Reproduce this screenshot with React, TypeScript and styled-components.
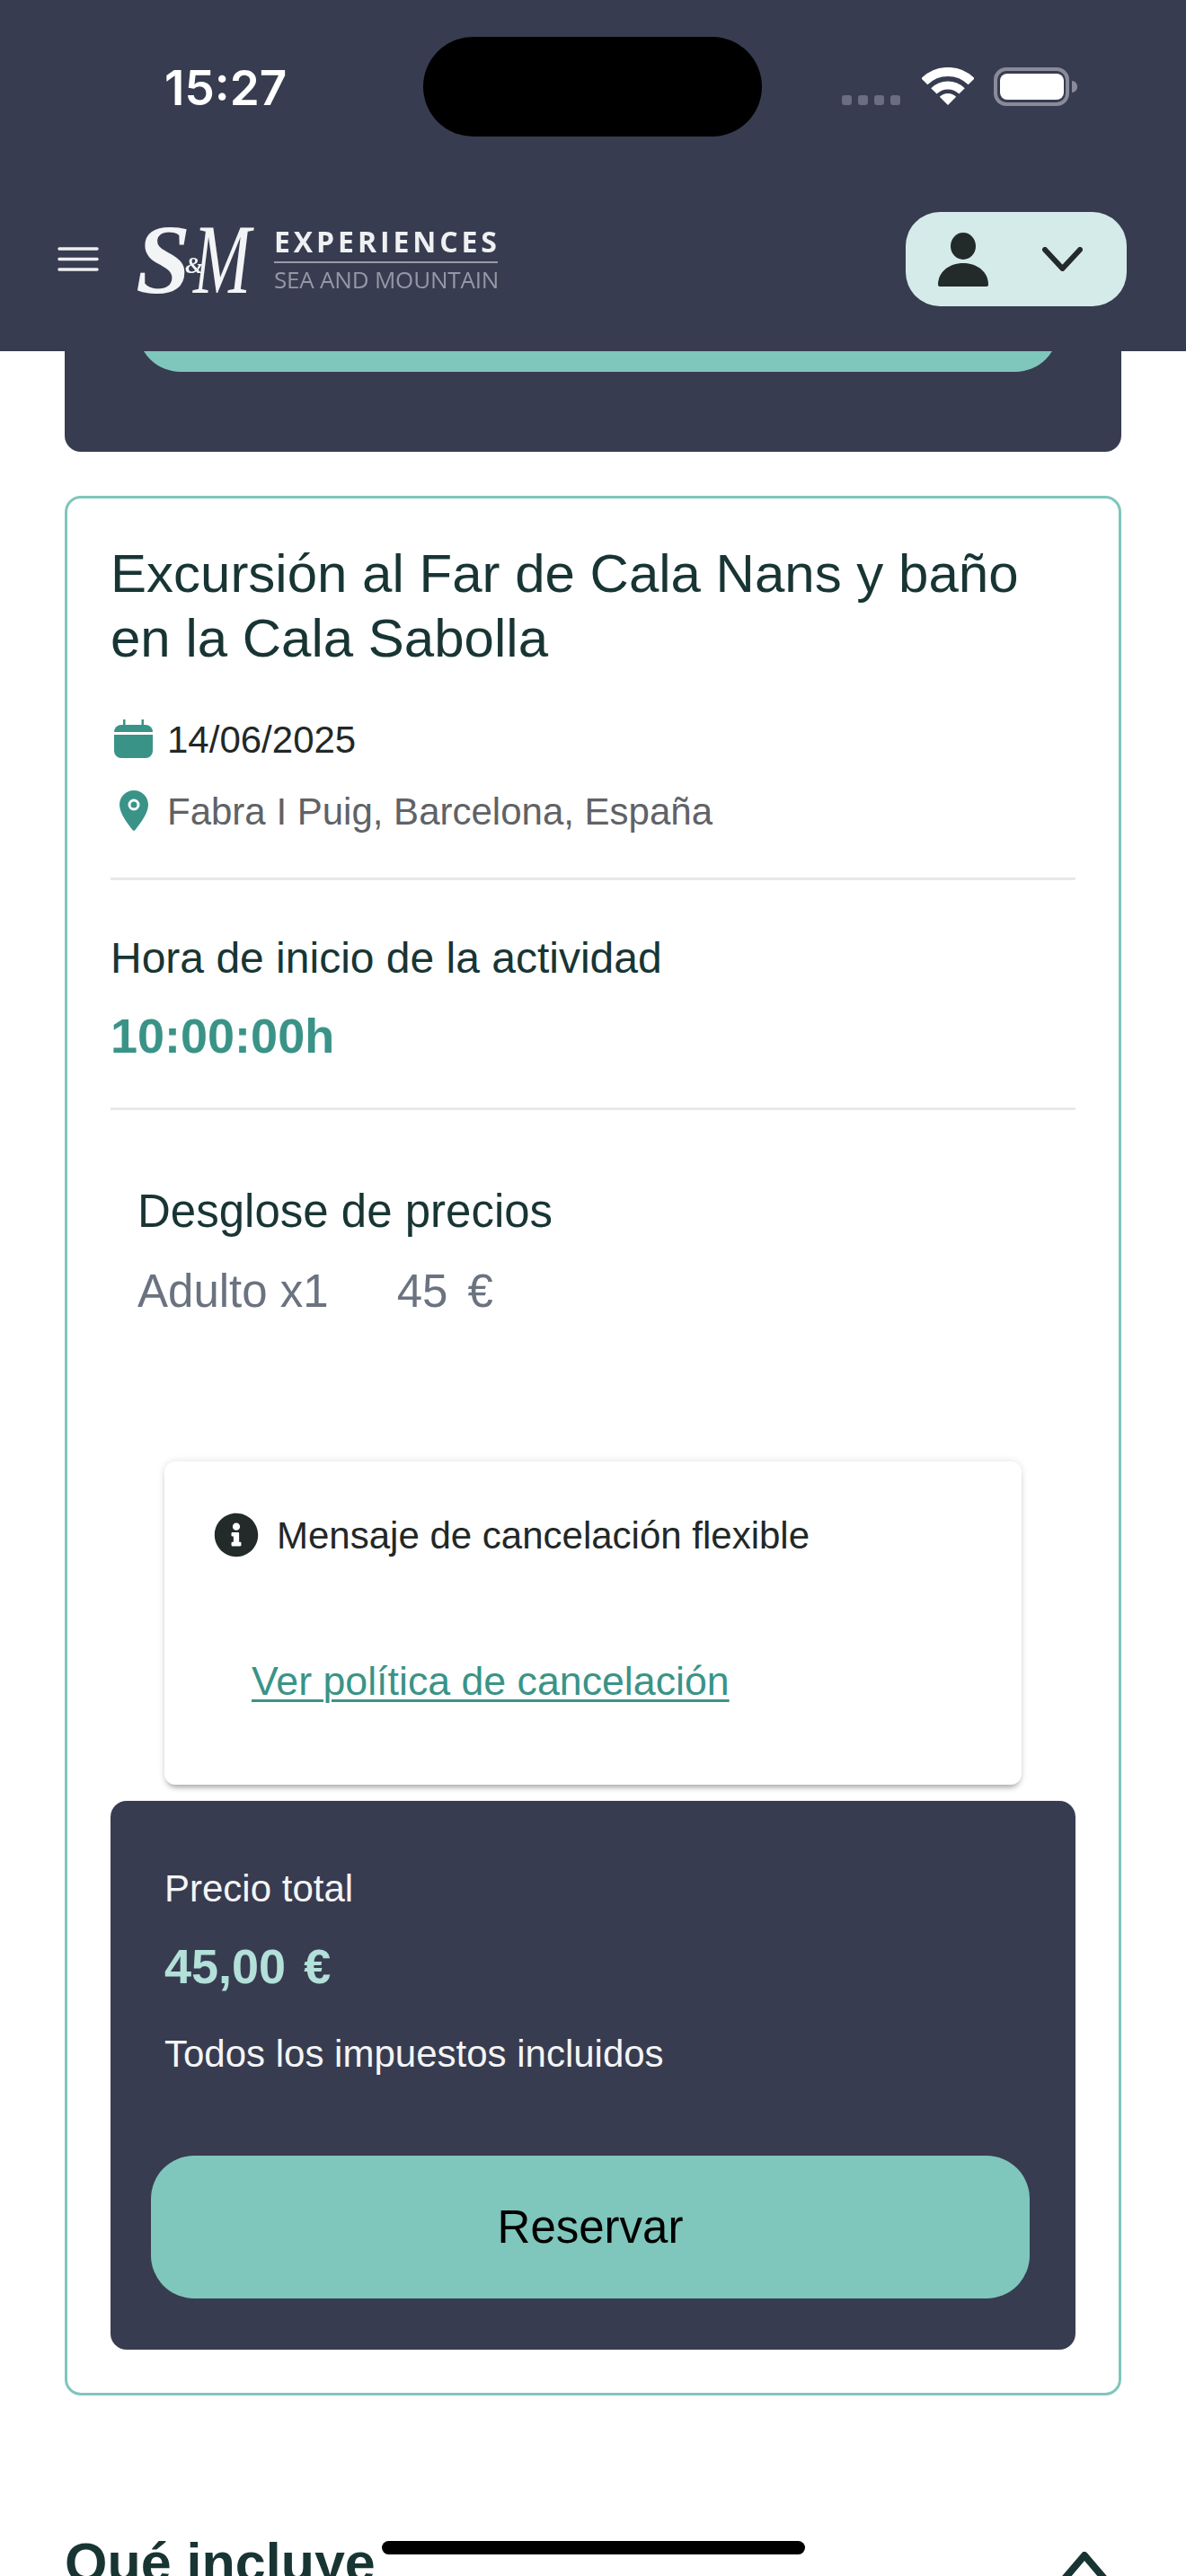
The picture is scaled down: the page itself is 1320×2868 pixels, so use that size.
import styled, { createGlobalStyle } from "styled-components";
import { FaInfoCircle } from "react-icons/fa";

const navy = "#383c50";
const teal = "#7fc6bc";
const deepTeal = "#3a9387";
const ink = "#183534";

const GlobalStyle = createGlobalStyle`
  html, body {
    margin: 0;
    padding: 0;
    background: #fff;
  }
  * {
    box-sizing: border-box;
  }
`;

const Page = styled.div`
  position: relative;
  width: 1320px;
  height: 2868px;
  overflow: hidden;
  background: #fff;
  font-family: "Liberation Sans", Arial, sans-serif;
`;

/* top bar */
const Header = styled.header`
  height: 391px;
  background: ${navy};
`;

const StatusBar = styled.div`
  display: flex;
  align-items: flex-start;
  height: 236px;
  padding: 41px 0 0 183px;
`;

const Clock = styled.span`
  width: 135px;
  margin-top: 25px;
  font-family: Inter, sans-serif;
  font-size: 53px;
  font-weight: 600;
  line-height: 64px;
  color: #fff;
  white-space: nowrap;
`;

const Island = styled.div`
  width: 377px;
  height: 111px;
  margin-left: 153px;
  border-radius: 56px;
  background: #000;
`;

const SignalDots = styled.div`
  display: flex;
  gap: 7px;
  margin: 65px 0 0 89px;
`;

const SignalDot = styled.span`
  width: 11px;
  height: 11px;
  border-radius: 3px;
  background: #6b6d80;
`;

const WifiIcon = styled.svg`
  width: 58px;
  height: 42px;
  margin: 34px 0 0 24px;
`;

const BatteryIcon = styled.svg`
  width: 94px;
  height: 43px;
  margin: 34px 0 0 22px;
`;

const NavBar = styled.div`
  display: flex;
  align-items: center;
  height: 105px;
  padding: 0 66px 0 64px;
`;

const MenuIcon = styled.svg`
  width: 46px;
  height: 28px;
  flex: none;
`;

const LogoMark = styled.div`
  display: flex;
  align-items: baseline;
  flex: none;
  width: 133px;
  height: 77px;
  margin-left: 41px;
  font-family: "Liberation Serif", serif;
  font-style: italic;
  font-weight: 700;
  font-size: 110px;
  line-height: 78px;
  color: #f3f4f6;
  filter: blur(0.4px);
`;

const LogoS = styled.span`
  flex: none;
  width: 61px;
`;

/* the ampersand sits small and raised between the two capitals */
const LogoAmp = styled.span`
  flex: none;
  width: 17px;
  margin-left: -6px;
  font-size: 26px;
  line-height: 30px;
  transform: translateY(-22px);
`;

const LogoM = styled.span`
  flex: none;
  width: 69px;
  margin-left: -8px;
  font-weight: 400;
  transform: scaleX(0.7);
  transform-origin: left center;
`;

const LogoWords = styled.div`
  display: flex;
  flex-direction: column;
  width: 249px;
  margin: 2px 0 0 21px;
  font-family: "Open Sans", sans-serif;
  white-space: nowrap;
  filter: blur(0.4px);
`;

const LogoTop = styled.span`
  padding-bottom: 5px;
  border-bottom: 2px solid #9a9ba9;
  font-size: 32px;
  font-weight: 700;
  line-height: 34px;
  letter-spacing: 3.9px;
  color: #eef0f2;
`;

const LogoBottom = styled.span`
  margin-top: 2px;
  font-size: 26px;
  line-height: 32px;
  letter-spacing: -0.2px;
  color: #9597a4;
`;

const AccountButton = styled.button`
  display: flex;
  align-items: center;
  gap: 60px;
  width: 246px;
  height: 105px;
  margin-left: auto;
  padding: 0 0 0 36px;
  border: 0;
  border-radius: 38px;
  background: #d5ebe9;
`;

/* tail of the panel scrolled under the header */
const ScrolledPanel = styled.section`
  height: 112px;
  margin: 0 72px;
  padding: 0 70px 0 81px;
  border-radius: 0 0 18px 18px;
  background: ${navy};
`;

const ScrolledButtonClip = styled.div`
  height: 23px;
  overflow: hidden;
`;

const ScrolledButton = styled.div`
  height: 158px;
  margin-top: -135px;
  border-radius: 48px;
  background: ${teal};
`;

/* booking card */
const Card = styled.section`
  margin: 49px 72px 0;
  padding: 48px;
  border: 3px solid ${teal};
  border-radius: 18px;
  background: #fff;
`;

const Title = styled.h1`
  margin: 0 0 51px;
  font-size: 60px;
  font-weight: 400;
  line-height: 72px;
  color: ${ink};
`;

const MetaRow = styled.div`
  display: flex;
  align-items: center;
  height: 48px;
  margin-top: ${(p) => p.$gap ?? 0}px;
  padding-top: 3px;
  font-size: 42px;
  line-height: 45px;
  color: ${(p) => p.$color};
`;

const MetaIconSlot = styled.span`
  display: flex;
  justify-content: center;
  width: 47px;
  margin: -3px 14px 0 2px;
`;

const Divider = styled.hr`
  height: 3px;
  margin: ${(p) => p.$top}px 0 0;
  border: 0;
  background: #e6e8ea;
`;

const StartLabel = styled.div`
  margin-top: 59px;
  font-size: 48px;
  line-height: 56px;
  color: ${ink};
`;

const StartTime = styled.div`
  margin-top: 26px;
  font-size: 54px;
  font-weight: 700;
  line-height: 64px;
  color: ${deepTeal};
`;

const Breakdown = styled.div`
  margin-top: 83px;
  padding-left: 30px;
`;

const BreakdownTitle = styled.div`
  font-size: 51px;
  line-height: 60px;
  color: ${ink};
`;

const BreakdownLine = styled.div`
  display: flex;
  gap: 76px;
  margin-top: 29px;
  font-size: 51px;
  line-height: 60px;
  word-spacing: 8px;
  color: #6b7280;
`;

const AdultLabel = styled.span`
  word-spacing: 0;
`;

const CancelNotice = styled.div`
  margin: 159px 60px 0;
  padding: 54px 55px 89px;
  border-radius: 12px;
  background: #fff;
  box-shadow: 0 6px 6px -3px rgba(0, 0, 0, 0.3), 0 0 8px rgba(0, 0, 0, 0.12);
`;

const NoticeRow = styled.div`
  display: flex;
  align-items: center;
  gap: 20px;
  padding-top: 3px;
  font-size: 42px;
  line-height: 52px;
  color: #222827;

  svg {
    flex: none;
    margin-top: -3px;
    color: #232a2a;
  }
`;

const PolicyLink = styled.a`
  display: block;
  margin: 110px 0 0 42px;
  font-size: 44.7px;
  line-height: 52px;
  color: ${deepTeal};
  text-decoration: underline;
  text-decoration-thickness: 3px;
  text-underline-offset: 5px;
`;

const TotalPanel = styled.div`
  margin-top: 18px;
  padding: 74px 51px 57px 45px;
  border-radius: 18px;
  background: ${navy};
`;

const TotalInfo = styled.div`
  padding-left: 15px;
`;

const TotalText = styled.div`
  margin-top: ${(p) => p.$gap ?? 0}px;
  font-size: 42px;
  line-height: 48px;
  color: #f4f5f6;
`;

const TotalAmount = styled.div`
  margin-top: 30px;
  font-size: 54px;
  font-weight: 700;
  line-height: 64px;
  word-spacing: 5px;
  color: #b3e0d9;
`;

const ReserveButton = styled.button`
  display: block;
  width: 100%;
  height: 159px;
  margin-top: 89px;
  border: 0;
  border-radius: 48px;
  background: ${teal};
  font-family: inherit;
  font-size: 51px;
  color: #000;
`;

/* next accordion section */
const SectionRow = styled.div`
  display: flex;
  justify-content: space-between;
  align-items: flex-start;
  margin-top: 150px;
  padding: 0 86px 0 72px;
`;

const SectionTitle = styled.h2`
  margin: 0;
  font-size: 61px;
  font-weight: 700;
  line-height: 72px;
  color: ${ink};
`;

const SectionChevron = styled.svg`
  width: 54px;
  height: 34px;
  margin-top: 24px;
`;

const HomeIndicator = styled.div`
  position: absolute;
  left: 425px;
  top: 2829px;
  width: 471px;
  height: 15px;
  border-radius: 8px;
  background: #000;
`;

function Wifi() {
  return (
    <WifiIcon viewBox="0 0 58 42">
      <path d="M29 42 L19.8 32.8 A13 13 0 0 1 38.2 32.8 Z" fill="#fff" />
      <path d="M13.4 26.4 A22 22 0 0 1 44.6 26.4" fill="none" stroke="#fff" strokeWidth="9" />
      <path d="M2.8 15.8 A37 37 0 0 1 55.2 15.8" fill="none" stroke="#fff" strokeWidth="10" />
    </WifiIcon>
  );
}

function Battery() {
  return (
    <BatteryIcon viewBox="0 0 94 43">
      <rect x="2" y="2" width="80" height="39" rx="12" fill="none" stroke="#8a8b9a" strokeWidth="4" />
      <rect x="7" y="7" width="71" height="29" rx="8" fill="#fff" />
      <path d="M87 15 a6 6 0 0 1 6 6.5 a6 6 0 0 1 -6 6.5 Z" fill="#8a8b9a" />
    </BatteryIcon>
  );
}

function Calendar() {
  return (
    <svg width="43" height="43" viewBox="0 0 43 43" fill={deepTeal}>
      <rect x="10" y="0" width="2.5" height="8" />
      <rect x="30.5" y="0" width="2.5" height="8" />
      <path d="M0 14 a8 8 0 0 1 8 -8 h27 a8 8 0 0 1 8 8 Z" />
      <path d="M0 17 H43 V35 a8 8 0 0 1 -8 8 H8 a8 8 0 0 1 -8 -8 Z" />
    </svg>
  );
}

function Pin() {
  return (
    <svg width="32" height="45" viewBox="0 0 32 45">
      <path
        d="M16 0 C7 0 0 7.2 0 16 C0 26 10 38 14.5 44 a2 2 0 0 0 3 0 C22 38 32 26 32 16 C32 7.2 25 0 16 0 Z"
        fill={deepTeal}
      />
      <circle cx="16" cy="16" r="5" fill="none" stroke="#fff" strokeWidth="3" />
    </svg>
  );
}

export default function App() {
  return (
    <Page>
      <GlobalStyle />
      <Header>
        <StatusBar>
          <Clock>15:27</Clock>
          <Island />
          <SignalDots>
            {[0, 1, 2, 3].map((i) => (
              <SignalDot key={i} />
            ))}
          </SignalDots>
          <Wifi />
          <Battery />
        </StatusBar>
        <NavBar>
          <MenuIcon viewBox="0 0 46 28">
            <path d="M2 2 H44 M2 13.5 H44 M2 25 H44" stroke="#eceef0" strokeWidth="3.5" strokeLinecap="round" />
          </MenuIcon>
          <LogoMark>
            <LogoS>S</LogoS>
            <LogoAmp>&amp;</LogoAmp>
            <LogoM>M</LogoM>
          </LogoMark>
          <LogoWords>
            <LogoTop>EXPERIENCES</LogoTop>
            <LogoBottom>SEA AND MOUNTAIN</LogoBottom>
          </LogoWords>
          <AccountButton>
            <svg width="56" height="60" viewBox="0 0 56 60" fill="#232a2a">
              <ellipse cx="28" cy="15" rx="14" ry="15" />
              <path d="M0 58 C0 44 12 34 28 34 C44 34 56 44 56 58 a2 2 0 0 1 -2 2 H2 a2 2 0 0 1 -2 -2 Z" />
            </svg>
            <svg width="45" height="27" viewBox="0 0 45 27">
              <path d="M3 3 L22.5 24 L42 3" fill="none" stroke="#232a2a" strokeWidth="6" strokeLinecap="round" strokeLinejoin="round" />
            </svg>
          </AccountButton>
        </NavBar>
      </Header>

      <ScrolledPanel>
        <ScrolledButtonClip>
          <ScrolledButton />
        </ScrolledButtonClip>
      </ScrolledPanel>

      <Card>
        <Title>Excursión al Far de Cala Nans y baño en la Cala Sabolla</Title>
        <MetaRow $color="#222827">
          <MetaIconSlot>
            <Calendar />
          </MetaIconSlot>
          14/06/2025
        </MetaRow>
        <MetaRow $gap={32} $color="#606266">
          <MetaIconSlot>
            <Pin />
          </MetaIconSlot>
          Fabra I Puig, Barcelona, España
        </MetaRow>
        <Divider $top={51} />
        <StartLabel>Hora de inicio de la actividad</StartLabel>
        <StartTime>10:00:00h</StartTime>
        <Divider $top={48} />
        <Breakdown>
          <BreakdownTitle>Desglose de precios</BreakdownTitle>
          <BreakdownLine>
            <AdultLabel>Adulto x1</AdultLabel>
            <span>45 €</span>
          </BreakdownLine>
        </Breakdown>
        <CancelNotice>
          <NoticeRow>
            <FaInfoCircle size={50} />
            Mensaje de cancelación flexible
          </NoticeRow>
          <PolicyLink href="#">Ver política de cancelación</PolicyLink>
        </CancelNotice>
        <TotalPanel>
          <TotalInfo>
            <TotalText>Precio total</TotalText>
            <TotalAmount>45,00 €</TotalAmount>
            <TotalText $gap={42}>Todos los impuestos incluidos</TotalText>
          </TotalInfo>
          <ReserveButton>Reservar</ReserveButton>
        </TotalPanel>
      </Card>

      <SectionRow>
        <SectionTitle>Qué incluye</SectionTitle>
        <SectionChevron viewBox="0 0 54 34">
          <path d="M4 31 L27 4 L50 31" fill="none" stroke={ink} strokeWidth="8" strokeLinecap="round" strokeLinejoin="round" />
        </SectionChevron>
      </SectionRow>
      <HomeIndicator />
    </Page>
  );
}
